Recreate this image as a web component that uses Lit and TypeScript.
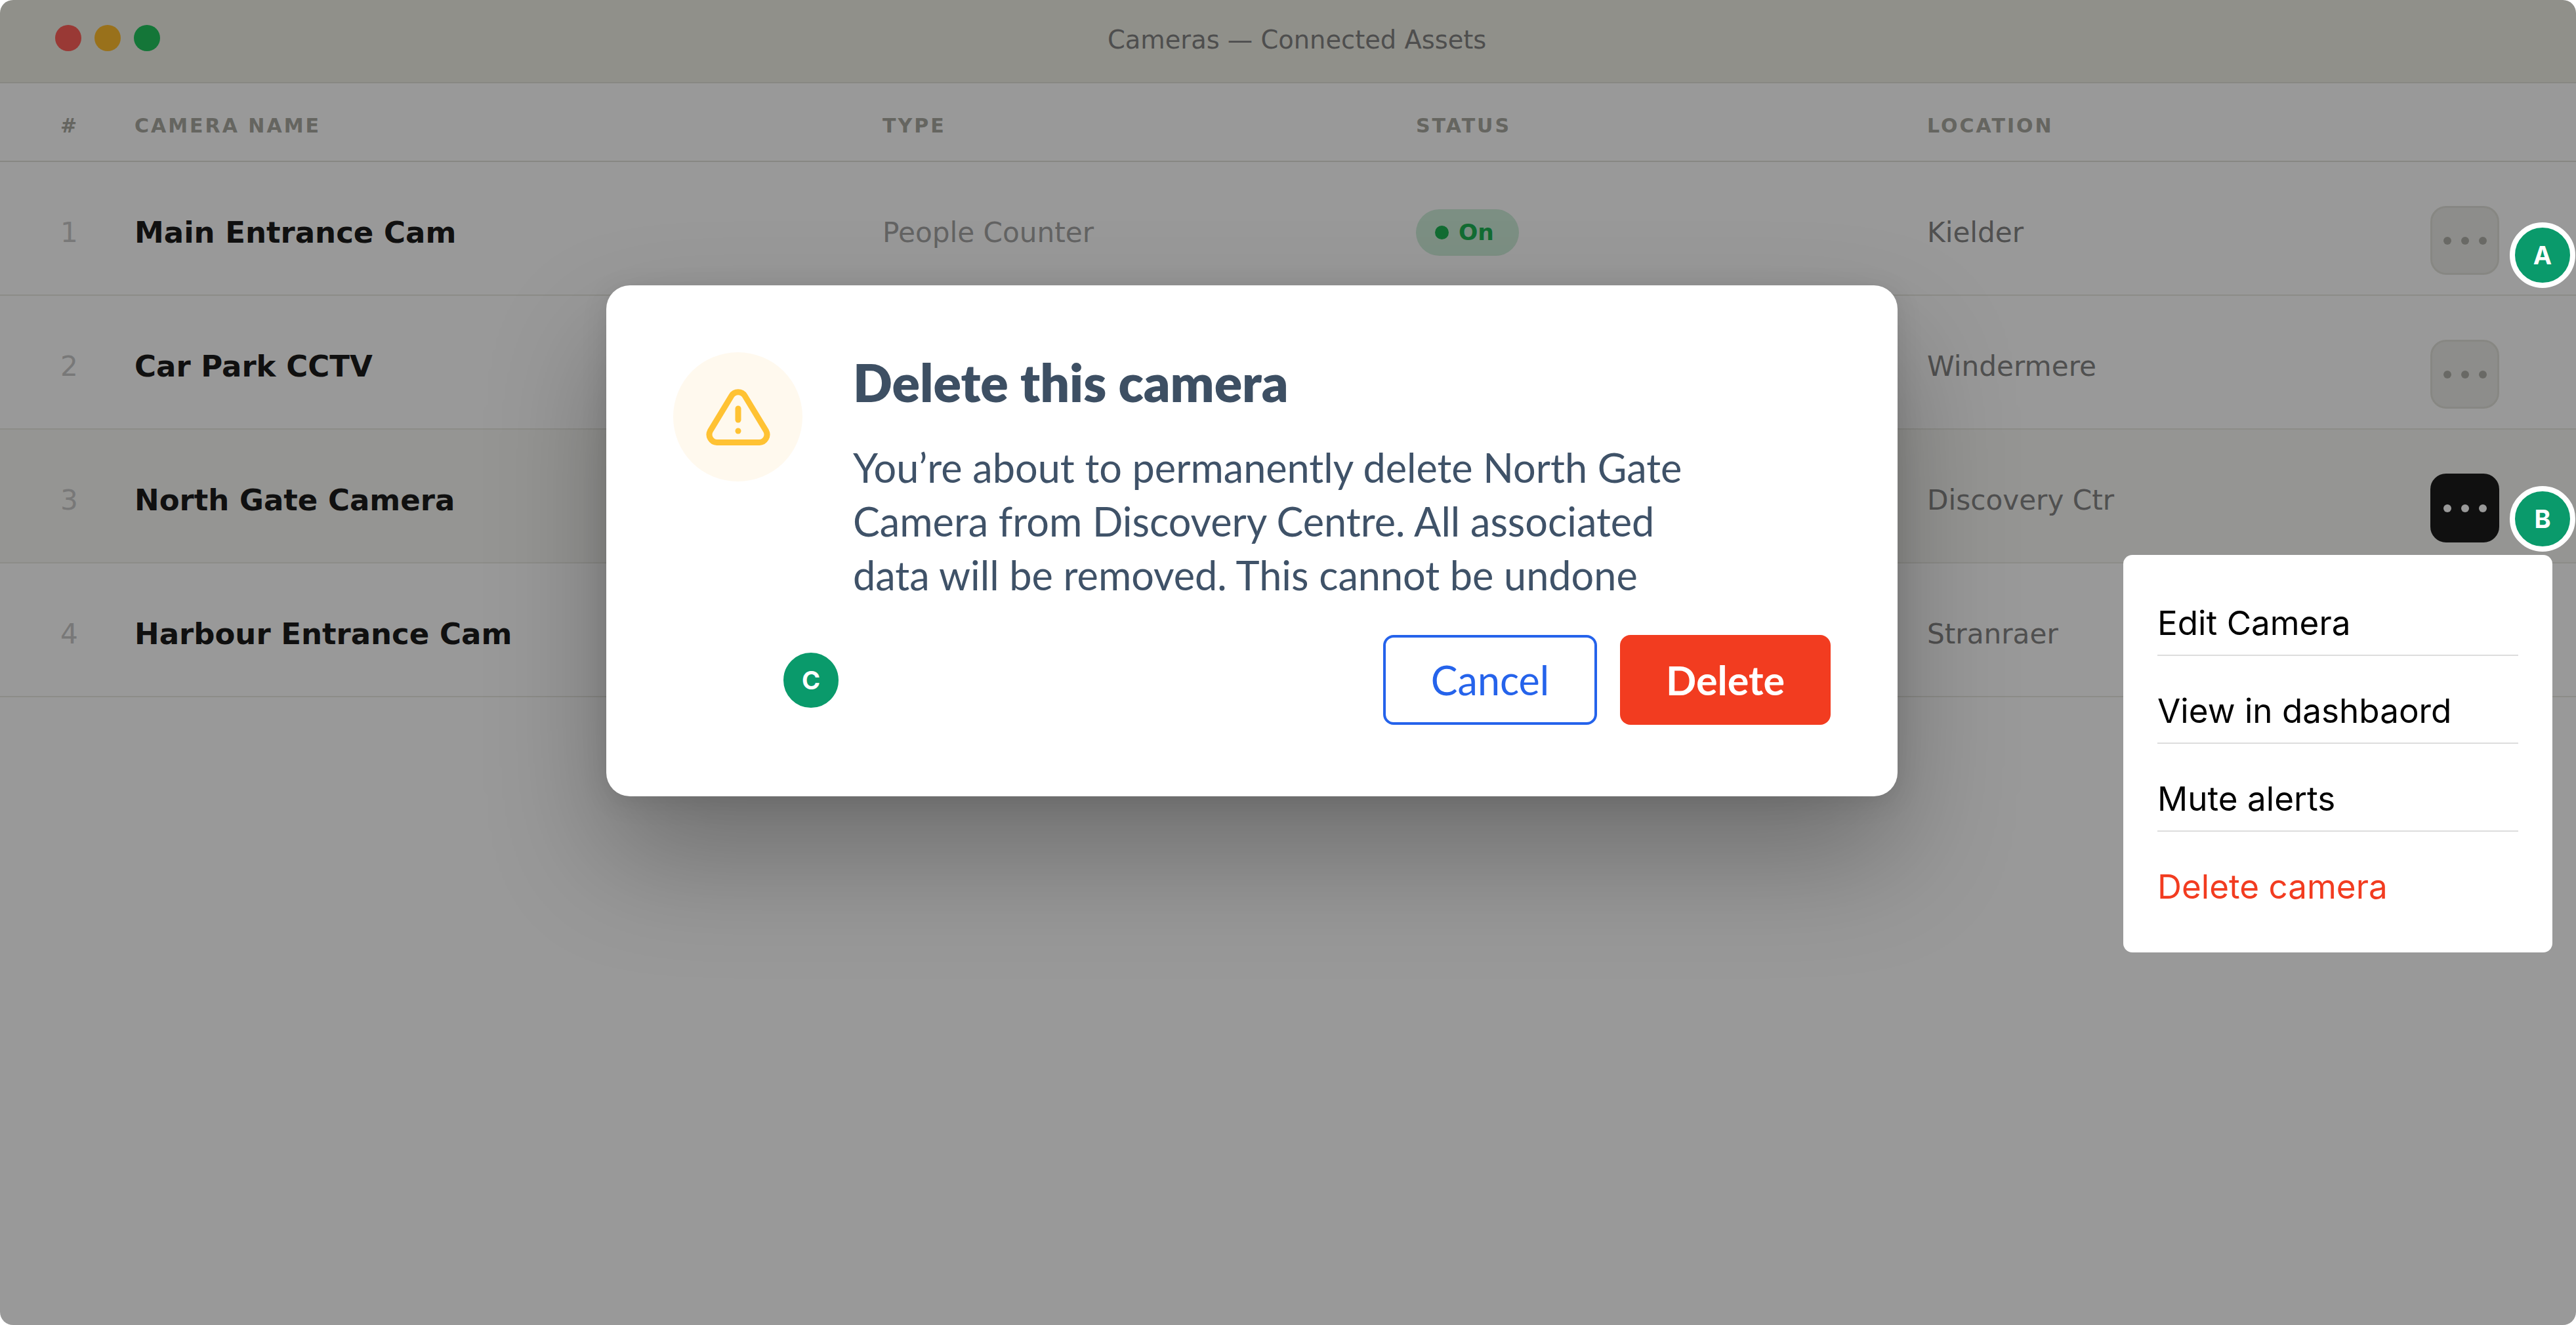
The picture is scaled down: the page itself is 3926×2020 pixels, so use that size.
import { LitElement, html, css, nothing } from "lit";
import { customElement } from "lit/decorators.js";

type Camera = { name: string; type?: string; on?: boolean; location: string; active?: boolean };

// type and status of the lower rows sit behind the dialog, so they are left out
const CAMERAS: Camera[] = [
  { name: "Main Entrance Cam", type: "People Counter", on: true, location: "Kielder" },
  { name: "Car Park CCTV", location: "Windermere" },
  { name: "North Gate Camera", location: "Discovery Ctr", active: true },
  { name: "Harbour Entrance Cam", location: "Stranraer" },
];

const MENU = ["Edit Camera", "View in dashbaord", "Mute alerts"];

@customElement("app-root")
export class AppRoot extends LitElement {
  static styles = css`
    :host {
      display: block;
      width: 100%;
      height: 100vh;
      background: #fff;
      font-family: "DejaVu Sans", sans-serif;
    }

    .window {
      position: relative;
      height: 100%;
      overflow: hidden;
      border-radius: 20px;
      background: #fff;
    }

    .titlebar {
      display: flex;
      align-items: center;
      height: 127px;
      padding: 0 0 10px 84px;
      box-sizing: border-box;
      background: #f0f0e7;
      border-bottom: 2px solid #e2e2da;
    }

    .lights {
      display: flex;
      gap: 20px;
    }

    .light {
      width: 40px;
      height: 40px;
      border-radius: 50%;
    }

    .red { background: #ff6059; }
    .yellow { background: #ffbd2e; }
    .green { background: #22c55e; }

    .title {
      margin: 5px 0 0 1444px;
      font-size: 38.4px;
      color: #838383;
    }

    .row {
      display: grid;
      grid-template-columns: 113px 1140px 813px 779px 767px 105px;
      align-items: center;
      padding-left: 92px;
      box-sizing: border-box;
      border-bottom: 2px solid #e9e9e3;
    }

    .head {
      height: 120px;
      padding-top: 10px;
      border-bottom-color: #e2e2da;
      font-size: 30px;
      font-weight: 700;
      letter-spacing: 3px;
      color: #a8a8a0;
    }

    .cam {
      height: 204px;
      padding-top: 12px;
      font-size: 42.2px;
    }

    .cam.active { background: #f8f8f5; }

    .num { color: #c8c8c8; }
    .name { font-size: 45px; font-weight: 700; color: #1c1c1c; }
    .type { color: #a6a6a6; }
    .loc { color: #858585; }

    .pill {
      display: inline-flex;
      align-items: center;
      gap: 15px;
      height: 71px;
      padding: 0 38px 0 29px;
      border-radius: 36px;
      background: #cfeedb;
      color: #1fb455;
      font-size: 34.5px;
      font-weight: 700;
    }

    .pill i {
      width: 21px;
      height: 21px;
      border-radius: 50%;
      background: currentColor;
    }

    .more {
      display: flex;
      align-items: center;
      justify-content: center;
      gap: 15px;
      width: 105px;
      height: 105px;
      margin-top: 25px;
      box-sizing: border-box;
      border: 3px solid #e2e2da;
      border-radius: 24px;
      background: #ececE8;
    }

    .more i {
      width: 12px;
      height: 12px;
      border-radius: 50%;
      background: #b0b0a8;
    }

    .active .more {
      border-color: #1c1c1c;
      background: #1c1c1c;
    }

    .active .more i { background: #fff; }

    .overlay {
      position: absolute;
      inset: 0;
      background: rgba(0, 0, 0, 0.4);
    }

    .dialog {
      position: absolute;
      left: 924px;
      top: 435px;
      display: flex;
      flex-direction: column;
      justify-content: space-between;
      width: 1968px;
      height: 779px;
      padding: 102px;
      box-sizing: border-box;
      border-radius: 36px;
      background: #fff;
      box-shadow: 0 90px 180px rgba(0, 0, 0, 0.28), 0 8px 40px rgba(0, 0, 0, 0.1);
      font-family: Lato, sans-serif;
    }

    .top {
      display: flex;
      gap: 77px;
    }

    .warn {
      display: flex;
      flex: none;
      align-items: center;
      justify-content: center;
      width: 197px;
      height: 197px;
      border-radius: 50%;
      background: #fff9ee;
    }

    h2 {
      margin: 0 0 43px;
      font-size: 78.8px;
      line-height: 92px;
      font-weight: 800;
      color: #3d4f63;
    }

    p {
      margin: 0;
      font-size: 61.2px;
      line-height: 82px;
      color: #3f5268;
    }

    .actions {
      display: flex;
      justify-content: flex-end;
      gap: 35px;
      margin-bottom: 7px;
    }

    button {
      height: 137px;
      box-sizing: border-box;
      border-radius: 16px;
      font-family: inherit;
      font-size: 61px;
    }

    .cancel {
      width: 326px;
      border: 4px solid #2563eb;
      background: #fff;
      color: #2563eb;
    }

    .delete {
      width: 321px;
      border: none;
      background: #f23c20;
      color: #fff;
      font-weight: 700;
    }

    .menu {
      position: absolute;
      left: 3236px;
      top: 846px;
      width: 654px;
      padding: 20px 52px 71px;
      box-sizing: border-box;
      border-radius: 14px;
      background: #fff;
      font-family: Inter, sans-serif;
      font-size: 51.2px;
      line-height: 60px;
      color: #000;
    }

    .menu div {
      height: 134px;
      padding-top: 53px;
      box-sizing: border-box;
      border-bottom: 2px solid #ddd;
    }

    .menu div.danger {
      height: auto;
      border: none;
      color: #f23c20;
    }

    .badge {
      position: absolute;
      display: flex;
      align-items: center;
      justify-content: center;
      width: 100px;
      height: 100px;
      box-sizing: border-box;
      border: 8px solid #fff;
      border-radius: 50%;
      background: #0a9a6b;
      color: #fff;
      font-family: Inter, sans-serif;
      font-size: 38px;
      font-weight: 700;
    }
  `;

  private renderRow(cam: Camera, i: number) {
    return html`
      <div class="row cam ${cam.active ? "active" : ""}">
        <span class="num">${i + 1}</span>
        <span class="name">${cam.name}</span>
        <span class="type">${cam.type ?? nothing}</span>
        <span>${cam.on ? html`<span class="pill"><i></i>On</span>` : nothing}</span>
        <span class="loc">${cam.location}</span>
        <span class="more"><i></i><i></i><i></i></span>
      </div>
    `;
  }

  render() {
    return html`
      <div class="window">
        <div class="titlebar">
          <div class="lights">
            <span class="light red"></span>
            <span class="light yellow"></span>
            <span class="light green"></span>
          </div>
          <span class="title">Cameras — Connected Assets</span>
        </div>
        <div class="row head">
          <span>#</span>
          <span>CAMERA NAME</span>
          <span>TYPE</span>
          <span>STATUS</span>
          <span>LOCATION</span>
          <span></span>
        </div>
        ${CAMERAS.map((cam, i) => this.renderRow(cam, i))}

        <div class="overlay"></div>

        <div class="dialog">
          <div class="top">
            <div class="warn">
              <svg width="98" height="86" viewBox="0 0 98 86" fill="none" stroke="#ffc233" stroke-width="9" stroke-linecap="round">
                <path d="M38.8 10.5a12 12 0 0 1 20.4 0L91.6 64a12 12 0 0 1-10.2 17.5H16.6A12 12 0 0 1 6.4 64Z" />
                <path d="M49 30v17" />
                <circle cx="49" cy="64" r="4.5" fill="#ffc233" stroke="none" />
              </svg>
            </div>
            <div>
              <h2>Delete this camera</h2>
              <p>
                You’re about to permanently delete North Gate<br />
                Camera from Discovery Centre. All associated<br />
                data will be removed. This cannot be undone
              </p>
            </div>
          </div>
          <div class="actions">
            <button class="cancel">Cancel</button>
            <button class="delete">Delete</button>
          </div>
        </div>

        <div class="menu">
          ${MENU.map((item) => html`<div>${item}</div>`)}
          <div class="danger">Delete camera</div>
        </div>

        <span class="badge" style="left:3825px;top:339px">A</span>
        <span class="badge" style="left:3825px;top:741px">B</span>
        <span class="badge" style="left:1186px;top:987px">C</span>
      </div>
    `;
  }
}
